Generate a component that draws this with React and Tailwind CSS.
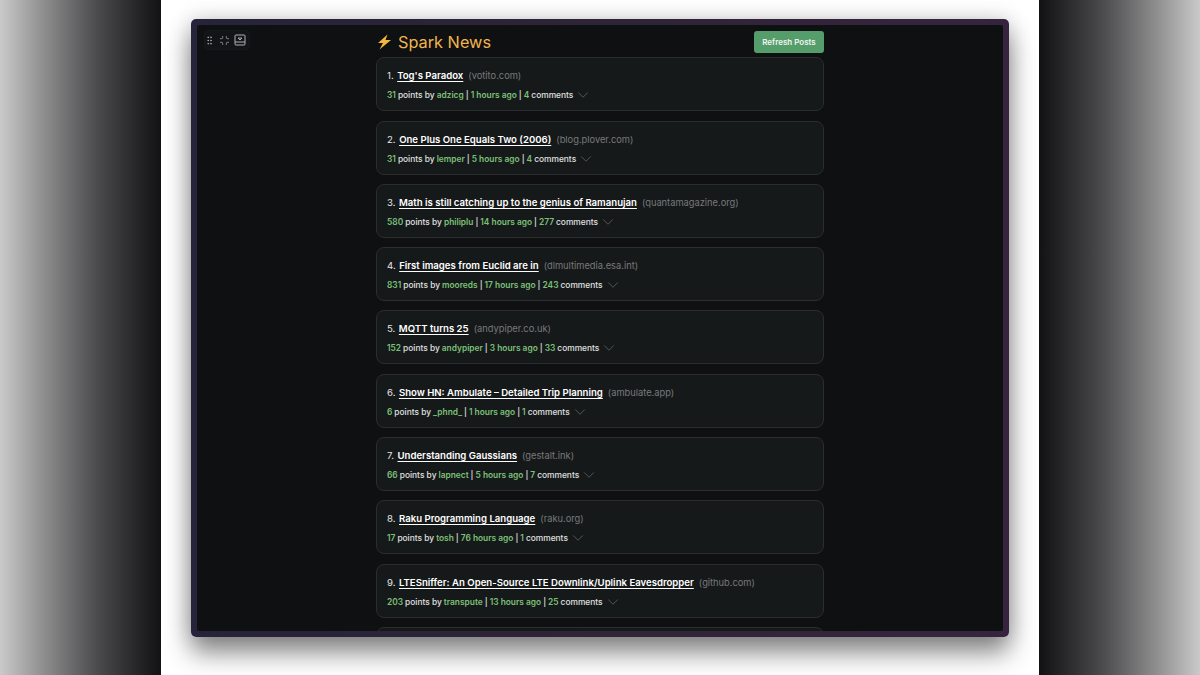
import React from "react";
import { ChevronDown, Minimize, GripVertical } from "lucide-react";

const posts = [
  { title: "Tog's Paradox", site: "votito.com", points: 31, by: "adzicg", ago: "1 hours ago", comments: 4 },
  { title: "One Plus One Equals Two (2006)", site: "blog.plover.com", points: 31, by: "lemper", ago: "5 hours ago", comments: 4 },
  { title: "Math is still catching up to the genius of Ramanujan", site: "quantamagazine.org", points: 580, by: "philiplu", ago: "14 hours ago", comments: 277 },
  { title: "First images from Euclid are in", site: "dlmultimedia.esa.int", points: 831, by: "mooreds", ago: "17 hours ago", comments: 243 },
  { title: "MQTT turns 25", site: "andypiper.co.uk", points: 152, by: "andypiper", ago: "3 hours ago", comments: 33 },
  { title: "Show HN: Ambulate – Detailed Trip Planning", site: "ambulate.app", points: 6, by: "_phnd_", ago: "1 hours ago", comments: 1 },
  { title: "Understanding Gaussians", site: "gestalt.ink", points: 66, by: "lapnect", ago: "5 hours ago", comments: 7 },
  { title: "Raku Programming Language", site: "raku.org", points: 17, by: "tosh", ago: "76 hours ago", comments: 1 },
  { title: "LTESniffer: An Open-Source LTE Downlink/Uplink Eavesdropper", site: "github.com", points: 203, by: "transpute", ago: "13 hours ago", comments: 25 },
];

function Post({ n, post }) {
  return (
    <div className="h-[54px] shrink-0 rounded-[8px] border border-[#2a2e2e] bg-[#16191a] px-[10px] pt-[11px]">
      <div className="flex items-baseline text-[9.6px] leading-[14px] text-[#e6e6e6]">
        <span className="mr-[3.5px]">{n}.</span>
        <span className="font-semibold text-white underline underline-offset-2">{post.title}</span>
        <span className="ml-[5px] text-[9.3px] text-[#77797b]">({post.site})</span>
      </div>
      <div className="mt-[6px] flex items-center text-[8.4px] leading-[12px] font-medium text-[#e0e0e0]">
        <span className="font-semibold text-[#7cc078]">{post.points}</span>
        <span className="ml-[2px]">points by</span>
        <span className="ml-[2px] font-semibold text-[#7cc078]">{post.by}</span>
        <span className="mx-[2px]">|</span>
        <span className="font-semibold text-[#7cc078]">{post.ago}</span>
        <span className="mx-[2px]">|</span>
        <span className="font-semibold text-[#7cc078]">{post.comments}</span>
        <span className="ml-[2px]">comments</span>
        <ChevronDown className="-my-[4px] ml-[1px] size-[18px] text-[#8a8c8e]" strokeWidth={0.7} />
      </div>
    </div>
  );
}

export default function App() {
  return (
    <div className="flex h-[675px] w-[1200px] overflow-hidden font-['Inter',sans-serif]">
      <div className="w-[161px] bg-gradient-to-r from-[#cacaca] via-[#4c4c4e] via-60% to-[#121214]" />
      <div className="flex flex-1 justify-center bg-white pt-[19px]">
        <div className="relative h-[618px] w-[818px] rounded-[5px] bg-gradient-to-r from-[#26233a] via-[#2f2438] to-[#36243f] p-[6px] shadow-[0_16px_26px_rgba(0,0,0,0.45),0_0_22px_rgba(0,0,0,0.18)]">
          <div className="flex h-full flex-col items-center overflow-hidden rounded-[2px] bg-[#0f1012]">
            <div className="absolute top-[11px] left-[13px] flex h-[20px] w-[46px] items-center gap-[4px] rounded-[4px] border border-[#17181b] bg-[#131417] text-[#b0b0b0]">
              <GripVertical className="-ml-[1px] size-[11px]" strokeWidth={1.5} />
              <Minimize className="size-[11px]" strokeWidth={1.5} />
              <svg viewBox="0 0 12 12" className="size-[12px]" fill="none" stroke="currentColor" strokeWidth="1">
                <rect x="1" y="1" width="10" height="10" rx="1" />
                <path d="M1 8h10M4 4h4L6 6z" />
              </svg>
            </div>
            <div className="flex w-[448px] shrink-0 flex-col">
              <div className="flex h-[32.18px] shrink-0 items-center justify-between pt-[2px]">
                <div className="flex items-center text-[16.3px] text-[#efb650]">
                  <svg viewBox="0 0 16 16" className="mr-[6px] size-[16px]">
                    <path d="M11.5 0.5 L2 9 H7 L3.5 15.5 L15 6 H9.5 L11.5 0.5 Z" fill="#f2b83a" />
                  </svg>
                  <span>Spark News</span>
                </div>
                <button className="h-[22px] w-[70px] rounded-[3px] bg-[#569d6c] text-[8px] font-semibold text-[#f0f5f0]">
                  Refresh Posts
                </button>
              </div>
              <div className="flex flex-col gap-[9.33px]">
                {posts.map((p, i) => (
                  <Post key={p.title} n={i + 1} post={p} />
                ))}
                <div className="h-[54px] shrink-0 rounded-[8px] border border-[#2a2e2e] bg-[#16191a]" />
              </div>
            </div>
          </div>
        </div>
      </div>
      <div className="w-[161px] bg-gradient-to-l from-[#cacaca] via-[#4c4c4e] via-60% to-[#121214]" />
    </div>
  );
}
